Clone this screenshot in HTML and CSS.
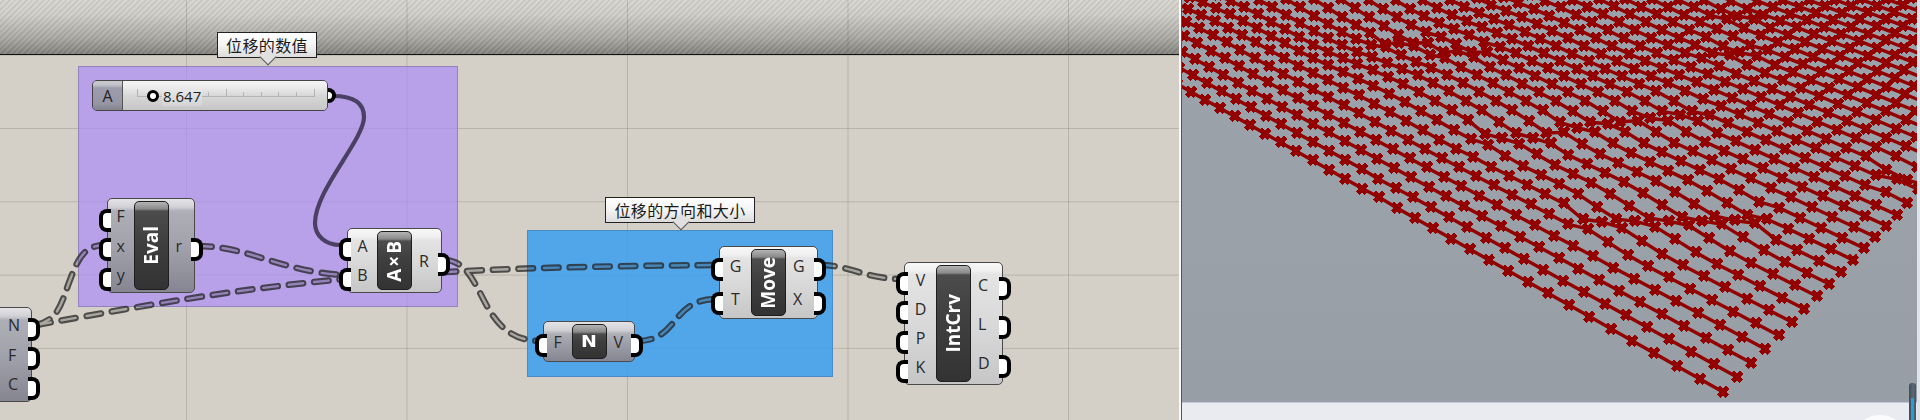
FILE: index.html
```html
<!DOCTYPE html>
<html lang="zh">
<head>
<meta charset="utf-8">
<title>Grasshopper</title>
<link rel="stylesheet" href="styles.css">
</head>
<body>
<main class="canvas">
  <div class="band"></div>
  <div class="grid"></div>
  <div class="group group-purple"></div>
  <div class="group group-blue"></div>

  <svg class="wires" width="1179" height="420" viewBox="0 0 1179 420">
    <defs>
      <g id="list-wires">
        <path d="M36 325C260 285 350 268 718 265"/>
        <path d="M36 325C60 320 62 300 70 280C78 258 85 245 105 245"/>
        <path d="M197 246C250 246 280 272 345 275"/>
        <path d="M445 260C487 262 476 341 541 341"/>
        <path d="M637 341C680 341 670 299 717 299"/>
        <path d="M820 265C850 265 865 279 902 279"/>
      </g>
      <mask id="hollow" maskUnits="userSpaceOnUse" x="0" y="0" width="1179" height="420">
        <use href="#list-wires" class="wire-outer"/>
        <use href="#list-wires" class="wire-inner"/>
      </mask>
    </defs>
    <rect class="wire-fill" width="1179" height="420" mask="url(#hollow)"/>
    <path class="wire-solid" d="M333 96C352 96 364 102 364 117C364 140 315 190 315 223C315 236 326 245 340 245"/>
  </svg>

  <div class="slider">
    <div class="slider-tab">A</div>
    <div class="slider-track">
      <svg class="ticks" width="206" height="30" viewBox="0 0 206 30">
        <path d="M14 8V15H191V8M103 8V15M85 11V15M120 11V15M138 11V15M155 11V15M173 11V15"/>
      </svg>
      <span class="slider-handle"></span>
      <span class="slider-value">8.647</span>
    </div>
    <span class="grip grip-out grip-slider"></span>
  </div>

  <div class="node dark n-eval">
    <div class="ports ports-in"><span class="port">F</span><span class="port">x</span><span class="port">y</span></div>
    <div class="core"><span class="core-text">Eval</span></div>
    <div class="ports ports-out"><span class="port">r</span></div>
  </div>

  <div class="node light n-axb">
    <div class="ports ports-in"><span class="port">A</span><span class="port">B</span></div>
    <div class="core"><span class="core-text">A×B</span></div>
    <div class="ports ports-out"><span class="port">R</span></div>
  </div>

  <div class="node dark n-plane">
    <div class="ports ports-out"><span class="port">N</span><span class="port">F</span><span class="port">C</span></div>
  </div>

  <div class="node dark n-z">
    <div class="ports ports-in"><span class="port">F</span></div>
    <div class="core"><span class="core-flat">N</span></div>
    <div class="ports ports-out"><span class="port">V</span></div>
  </div>

  <div class="node light n-move">
    <div class="ports ports-in"><span class="port">G</span><span class="port">T</span></div>
    <div class="core"><span class="core-text">Move</span></div>
    <div class="ports ports-out"><span class="port">G</span><span class="port">X</span></div>
  </div>

  <div class="node light n-intcrv">
    <div class="ports ports-in"><span class="port">V</span><span class="port">D</span><span class="port">P</span><span class="port">K</span></div>
    <div class="core"><span class="core-text">IntCrv</span></div>
    <div class="ports ports-out"><span class="port">C</span><span class="port">L</span><span class="port">D</span></div>
  </div>

  <div class="tip tip-value">位移的数值</div>
  <div class="tip tip-vector">位移的方向和大小</div>
</main>

<div class="divider"></div>

<section class="viewport">
  <div class="scene">
    <svg class="mesh" id="mesh" width="735" height="402" viewBox="1182 0 735 402">
      <path id="mesh-lines" class="mesh-lines"/>
      <path id="mesh-marks" class="mesh-marks"/>
    </svg>
  </div>
  <div class="status"></div>
  <div class="dial"></div>
  <div class="gauge"><span class="gauge-fill"></span></div>
</section>
<script src="mesh.js"></script>
</body>
</html>
```

FILE: styles.css
```css
* { box-sizing: border-box; }
html, body { margin: 0; height: 100%; overflow: hidden; }
body {
  display: flex;
  width: 1920px;
  height: 420px;
  background: #e8eaef;
  font-family: "Open Sans", "Liberation Sans", sans-serif;
}

/* Definition canvas */
.canvas {
  position: relative;
  flex: none;
  width: 1179px;
  height: 420px;
  overflow: hidden;
  background: #d4d0c8;
}
.band {
  position: absolute;
  left: 0; right: 0; top: 0;
  height: 55px;
  border-bottom: 1px solid #111;
  background:
    repeating-linear-gradient(135deg, rgba(255,255,255,.07) 0 2px, rgba(0,0,0,.05) 2px 4px),
    linear-gradient(180deg, #d6d4ce 0, #d0cec8 14px, #a9a8a2 38px, #82817c 54px);
}
.grid {
  position: absolute;
  inset: 0;
  background-image:
    linear-gradient(90deg, rgba(40,35,10,.16) 1px, transparent 1px),
    linear-gradient(180deg, rgba(40,35,10,.16) 1px, transparent 1px);
  background-size: 220.5px 420px, 1179px 73.3px;
  background-position: 186px 0, 0 54.7px;
}
.group { position: absolute; }
.group-purple {
  left: 78px; top: 66px; width: 380px; height: 241px;
  background: rgba(173,141,246,.7);
  border: 1px solid rgba(120,110,160,.6);
}
.group-blue {
  left: 527px; top: 230px; width: 306px; height: 147px;
  background: rgba(58,157,238,.85);
  border: 1px solid rgba(70,130,180,.7);
}

/* Wires */
.wires { position: absolute; left: 0; top: 0; }
.wire-outer, .wire-inner {
  fill: none;
  stroke-linecap: round;
  stroke-dasharray: 14.6 11;
}
.wire-outer { stroke: #fff; stroke-width: 6.5; }
.wire-inner { stroke: #505050; stroke-width: 2.4; }
.wire-fill { fill: rgba(38,38,38,.78); }
.wire-solid { fill: none; stroke: #4a4063; stroke-width: 4.2; stroke-linecap: round; }

/* Number slider */
.slider {
  position: absolute;
  left: 92px; top: 80px;
  display: flex;
  width: 236px; height: 31px;
  border: 1px solid #444;
  border-radius: 5px;
}
.slider-tab {
  flex: none;
  display: flex;
  align-items: center;
  justify-content: center;
  width: 30px;
  border-right: 1px solid #555;
  border-radius: 4px 0 0 4px;
  background: linear-gradient(180deg, #c9c9cf 0, #c2c2c9 4px, #9c9cac 7px, #9696a6 22px, #85858f 100%);
  color: #222;
  font-size: 16px;
}
.slider-track {
  position: relative;
  flex: 1;
  display: flex;
  align-items: center;
  padding-left: 24px;
  border-radius: 0 4px 4px 0;
  background: linear-gradient(180deg, #f4f4f4 0, #ececec 6px, #d8d8d8 14px, #c6c6c6 100%);
}
.ticks { position: absolute; left: 0; top: 0; }
.ticks path { fill: none; stroke: #b4b4b4; stroke-width: 1; shape-rendering: crispEdges; }
.slider-handle {
  position: relative;
  flex: none;
  width: 12px; height: 12px;
  border: 3.4px solid #000;
  border-radius: 50%;
  background: #fff;
}
.slider-value {
  position: relative;
  margin-left: 3px;
  padding: 0 1px;
  color: #222;
  font-size: 15px;
  background: linear-gradient(180deg, #ececec, #d4d4d4);
}

/* Components */
.node {
  position: absolute;
  display: flex;
  padding: 2px 0;
  border: 1px solid #4a4a4a;
  border-radius: 5px;
  color: #2a2a2a;
  font-size: 16px;
}
.light { background: linear-gradient(180deg, #f7f7f7 0, #f0f0f0 8px, #e4e4e4 11px, #d6d6d6 60%, #c6c6c6 100%); }
.dark { background: linear-gradient(180deg, #e4e4e8 0, #d2d2d6 8px, #aeaeb6 12px, #a2a2ac 50%, #868692 100%); }

.ports {
  flex: 1;
  display: flex;
  flex-direction: column;
  justify-content: center;
  --row: 29.5px;
}
.port {
  position: relative;
  display: flex;
  align-items: center;
  justify-content: center;
  height: var(--row);
  line-height: 1;
}
.ports-out .port { justify-content: flex-start; padding-left: 7px; }
.ports-in .port::before,
.ports-out .port::after,
.grip {
  content: "";
  position: absolute;
  top: 50%;
  width: 8px; height: 15px;
  margin-top: -7.5px;
  border: 4px solid #000;
  background: #fff;
}
.ports-in .port::before {
  left: -9px;
  border-right: 0;
  border-radius: 8px 0 0 8px;
}
.ports-out .port::after,
.grip-out {
  border-left: 0;
  border-radius: 0 8px 8px 0;
}
.ports-out .port::after { right: -9px; }

.core {
  flex: none;
  display: flex;
  align-items: center;
  justify-content: center;
  width: 35px;
  border: 1px solid #1e1e1e;
  border-radius: 5px;
  background: linear-gradient(180deg, #b4b4b4 0, #8a8a8a 7px, #4c4c4c 9px, #3e3e3e 50%, #333 100%);
  color: #fff;
}
.core-text {
  writing-mode: vertical-rl;
  text-orientation: sideways;
  transform: rotate(180deg);
  font-size: 19px;
  font-weight: 700;
  line-height: 1;
  white-space: nowrap;
}
.core-flat {
  font-family: "DejaVu Sans", sans-serif;
  font-size: 19px;
  font-weight: 700;
  line-height: 1;
  transform: scaleY(.8);
}
.grip-slider { right: -9px; }

.n-eval { left: 107px; top: 198px; width: 88px; height: 95px; }
.n-axb { left: 347px; top: 228px; width: 95px; height: 65px; }
.n-axb .ports { --row: 30px; }
.n-axb .core-text { letter-spacing: 2px; }
.n-plane { left: -60px; top: 307px; width: 92px; height: 95px; justify-content: flex-end; }
.n-plane .ports-out { flex: none; width: 30px; }
.n-z { left: 543px; top: 321px; width: 92px; height: 41px; }
.n-move { left: 719px; top: 246px; width: 99px; height: 73px; }
.n-move .ports { --row: 34px; }
.n-intcrv { left: 904px; top: 262px; width: 99px; height: 123px; }
.n-intcrv .ports-out { --row: 39px; }

/* Callouts */
.tip {
  position: absolute;
  display: flex;
  align-items: center;
  justify-content: center;
  height: 26px;
  border: 1px solid #222;
  background: linear-gradient(180deg, #fff 0, #f4f4f4 50%, #dcdcdc 100%);
  color: #1a1a1a;
  font-family: "Noto Sans CJK SC", "Noto Sans", sans-serif;
  font-size: 16px;
  letter-spacing: .4px;
  white-space: nowrap;
}
.tip::after {
  content: "";
  position: absolute;
  left: 50%;
  bottom: -6px;
  width: 11px; height: 11px;
  margin-left: -5.5px;
  border-right: 1px solid #555;
  border-bottom: 1px solid #555;
  background: #e0e0e0;
  transform: rotate(45deg);
}
.tip-value { left: 217px; top: 32px; width: 100px; }
.tip-vector { left: 605px; top: 197px; width: 150px; }

/* Divider */
.divider {
  flex: none;
  width: 3px;
  height: 420px;
  border-right: 1px solid #555;
  background: #fafafa;
}

/* Rhino viewport */
.viewport {
  position: relative;
  flex: 1;
  display: flex;
  flex-direction: column;
  height: 420px;
  overflow: hidden;
  border-right: 3px solid #dfe3ea;
}
.scene {
  flex: none;
  height: 402px;
  background: linear-gradient(180deg, #9aa2ab 0, #9aa1a9 50%, #989ea6 100%);
}
.mesh { display: block; }
.mesh-lines { fill: none; stroke: #930000; stroke-width: 3.4; stroke-linejoin: round; }
.mesh-marks { fill: none; stroke: #930000; stroke-width: 4.4; shape-rendering: crispEdges; }
.status {
  flex: 1;
  border-top: 1px solid #c4c8da;
  background: #e9ebf0;
}
.dial {
  position: absolute;
  left: 668px; top: 415px;
  width: 60px; height: 60px;
  border-radius: 50%;
  background: #fbfbfd;
}
.gauge {
  position: absolute;
  left: 727px; top: 383px;
  width: 7px; height: 40px;
  border-radius: 3px 3px 0 0;
  background: linear-gradient(90deg, #3e4c56, #5a6974 60%, #46535c);
}
.gauge-fill {
  position: absolute;
  left: 2px; right: 2px; top: 15px; bottom: 0;
  background: #2a9bdc;
}
```

FILE: mesh.js
```js
// Perspective grid of interpolated curves, displaced by folds of the surface.
(function () {
  var O = [1723, 392];
  var A = -23.59, B = -13.31, C = 14.6, D = -14.86, G = 0.00985, H = 0.0125;

  // fold: x range, y level at x0 and its slope, half height, relax distance
  var folds = [
    { x0: 1580, x1: 1765, y: 222, s: -0.01, d: 7, r: 30 },
    { x0: 1545, x1: 1700, y: 131, s: -0.12, d: 5, r: 20 },
    { x0: 1475, x1: 1545, y: 137, s: 0, d: 5, r: 20 },
    { x0: 1880, x1: 1930, y: 176, s: 0.2, d: 6, r: 20 },
    { x0: 1705, x1: 1755, y: 52, s: 0, d: 4, r: 12 },
    { x0: 1710, x1: 1760, y: 16, s: 0, d: 3, r: 10 },
    { x0: 1375, x1: 1425, y: 39, s: 0, d: 5, r: 16 },
    { x0: 1440, x1: 1485, y: 52, s: 0, d: 5, r: 14 },
    { x0: 1375, x1: 1405, y: 188, s: 0, d: 3, r: 10 }
  ];

  function smooth(a, b, x) {
    var t = Math.max(0, Math.min(1, (x - a) / (b - a)));
    return t * t * (3 - 2 * t);
  }

  function project(u, v) {
    var w = 1 + G * u + H * v;
    var x = O[0] + (A * u + C * v) / w;
    var y = O[1] + (B * u + D * v) / w;
    var dy = 0;
    folds.forEach(function (f) {
      var win = smooth(f.x0 - 10, f.x0 + 6, x) * (1 - smooth(f.x1 - 6, f.x1 + 10, x));
      if (!win) return;
      var t = y - (f.y + f.s * (x - f.x0));
      var a = Math.abs(t), sign = t < 0 ? -1 : 1, s = 0;
      if (a < f.d) s = -t;
      else if (a < f.d + f.r) s = -sign * f.d * (1 - (a - f.d) / f.r);
      dy += win * s;
    });
    // undulation of the surface further away from the front corner
    var fade = smooth(8, 28, u) * smooth(1, 8, v);
    dy += fade * 6 * Math.sin(u * 0.42 + v * 0.28) * Math.cos(v * 0.24 - u * 0.1);
    return [x, y + dy];
  }

  var lines = "", marks = "";
  for (var v = 0; v <= 70; v++) {
    var started = false;
    for (var u = 0; u <= 80; u++) {
      var p = project(u, v);
      if (p[0] < 1160 || p[0] > 1940 || p[1] < -30 || p[1] > 420) { started = false; continue; }
      lines += (started ? "L" : "M") + p[0].toFixed(1) + " " + p[1].toFixed(1);
      started = true;
      var x = Math.round(p[0]), y = Math.round(p[1]);
      marks += "M" + (x - 4.5) + " " + (y - 4.5) + "L" + (x + 4.5) + " " + (y + 4.5) +
               "M" + (x - 4.5) + " " + (y + 4.5) + "L" + (x + 4.5) + " " + (y - 4.5);
    }
  }
  document.getElementById("mesh-lines").setAttribute("d", lines);
  document.getElementById("mesh-marks").setAttribute("d", marks);
})();
```
